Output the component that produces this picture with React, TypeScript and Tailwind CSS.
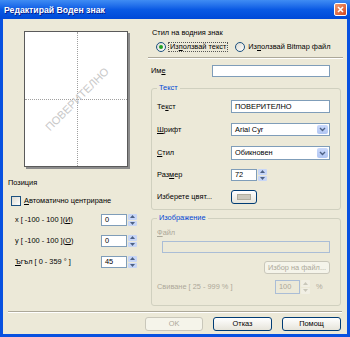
import React from "react";

const Arrow = ({ up, color = "#4d6185" }: { up?: boolean; color?: string }) => (
  <svg width="5" height="3" viewBox="0 0 5 3">
    <path d={up ? "M0 3 L2.5 0 L5 3 Z" : "M0 0 L2.5 3 L5 0 Z"} fill={color} />
  </svg>
);

const Spin = ({ disabled }: { disabled?: boolean }) => (
  <div className="ml-[1px] flex h-full w-[9px] flex-col gap-[1px]">
    <div
      className={`flex flex-1 items-center justify-center rounded-[1px] ${
        disabled ? "bg-[#f1efe4]" : "bg-[#c7d6f7]"
      }`}
    >
      <Arrow up color={disabled ? "#c9c7ba" : "#4d6185"} />
    </div>
    <div
      className={`flex flex-1 items-center justify-center rounded-[1px] ${
        disabled ? "bg-[#f1efe4]" : "bg-[#c7d6f7]"
      }`}
    >
      <Arrow color={disabled ? "#c9c7ba" : "#4d6185"} />
    </div>
  </div>
);

const Input = ({ value, w, disabled }: { value?: string; w: string; disabled?: boolean }) => (
  <div
    className={`flex h-full items-center border pl-[3px] ${w} ${
      disabled ? "border-[#aabdd6] bg-[#ece9d8] text-[#aca899]" : "border-[#7f9db9] bg-white"
    }`}
  >
    {value}
  </div>
);

const Combo = ({ value }: { value: string }) => (
  <div className="flex h-full w-[99px] items-center justify-between border border-[#7f9db9] bg-white pl-[3px]">
    <span>{value}</span>
    <div className="m-[1px] flex h-[calc(100%-2px)] w-[11px] items-center justify-center rounded-[2px] bg-gradient-to-b from-[#c9d8fb] to-[#b1c6f3]">
      <svg width="7" height="5" viewBox="0 0 7 5">
        <path d="M1 1 L3.5 3.5 L6 1" stroke="#4d6185" strokeWidth="1.4" fill="none" />
      </svg>
    </div>
  </div>
);

const Btn = ({ label, w, disabled }: { label: string; w: string; disabled?: boolean }) => (
  <div
    className={`flex h-full items-center justify-center rounded-[3px] border ${w} ${
      disabled
        ? "border-[#c9c7ba] bg-[#f5f4ea] text-[#aca899]"
        : "border-[#003c74] bg-gradient-to-b from-white to-[#e6e4da]"
    }`}
  >
    {label}
  </div>
);

const Radio = ({ checked }: { checked?: boolean }) => (
  <div className="flex h-[10px] w-[10px] items-center justify-center rounded-full border border-[#1c5180] bg-gradient-to-br from-[#dcdad0] to-white">
    {checked && <div className="h-[4px] w-[4px] rounded-full bg-[#21a121]" />}
  </div>
);

const U = ({ children }: { children: React.ReactNode }) => <span className="underline">{children}</span>;

export default function App() {
  return (
    <div className="flex h-[337px] w-[350px] flex-col bg-[#0851e0] font-['Liberation_Sans',Arial,sans-serif] text-[7.4px] leading-[10px] text-black">
      {/* title bar */}
      <div className="flex h-[19px] items-center justify-between bg-gradient-to-b from-[#3f8cf3] via-[#0a5ae4] to-[#0049d8] pl-[4px] pr-[3px]">
        <span className="text-[8.7px] font-bold text-white [text-shadow:1px_1px_0_#0a1e8a]">Редактирай Воден знак</span>
        <div className="flex h-[13px] w-[13px] items-center justify-center rounded-[2px] border border-white bg-gradient-to-br from-[#f09a70] to-[#d2451e]">
          <svg width="7" height="7" viewBox="0 0 7 7">
            <path d="M1 1 L6 6 M6 1 L1 6" stroke="white" strokeWidth="1.6" />
          </svg>
        </div>
      </div>

      {/* body */}
      <div className="mx-[3px] mb-[3px] flex-1 bg-[#ece9d8]">
        <div className="flex h-[292px]">
          {/* left column */}
          <div className="flex w-[145px] flex-col">
            <div className="relative ml-[21px] mt-[12px] h-[136px] w-[104px] border border-[#5a5a5a] bg-white shadow-[2px_2px_0_#8c8c8c]">
              <div className="absolute left-[52px] top-0 h-full border-l border-dotted border-[#a0a0a0]" />
              <div className="absolute left-0 top-[67px] w-full border-t border-dotted border-[#a0a0a0]" />
              <div className="absolute left-[52px] top-[67px] -translate-x-1/2 -translate-y-1/2 -rotate-45 whitespace-nowrap text-[11px] leading-[12px] text-[#c8c8c8]">
                ПОВЕРИТЕЛНО
              </div>
            </div>
            <div className="ml-[5px] mt-[11px]">Позиция</div>
            <div className="ml-[8px] mt-[8px] flex items-center">
              <div className="h-[10px] w-[10px] border border-[#1c5180] bg-gradient-to-br from-[#dcdad0] to-white" />
              <span className="ml-[3px]">
                <U>А</U>втоматично центриране
              </span>
            </div>
            <div className="ml-[12px] mt-[8px] flex h-[12px] items-center">
              <span className="w-[86px]">
                x [ -100 - 100 ](<U>И</U>)
              </span>
              <Input value="0" w="w-[26px]" />
              <Spin />
            </div>
            <div className="ml-[12px] mt-[9px] flex h-[12px] items-center">
              <span className="w-[86px]">
                y [ -100 - 100 ](<U>О</U>)
              </span>
              <Input value="0" w="w-[26px]" />
              <Spin />
            </div>
            <div className="ml-[12px] mt-[9px] flex h-[12px] items-center">
              <span className="w-[86px]">
                <U>Ъ</U>гъл [ 0 - 359 ° ]
              </span>
              <Input value="45" w="w-[26px]" />
              <Spin />
            </div>
          </div>

          {/* right column */}
          <div className="flex w-[198px] flex-col">
            <div className="ml-[4px] mt-[9px]">Стил на водния знак</div>
            <div className="mt-[4px] flex h-[10px] items-center">
              <div className="ml-[8px]">
                <Radio checked />
              </div>
              <span className="ml-[2px] border border-dotted border-[#555] px-[1px] leading-[8px]">
                Из<U>п</U>олзвай текст
              </span>
              <div className="ml-[7px]">
                <Radio />
              </div>
              <span className="ml-[3px]">
                Из<U>п</U>олзвай Bitmap файл
              </span>
            </div>
            <div className="mt-[5px] h-[2px] w-[195px] border-t border-b border-t-[#aca899] border-b-white" />
            <div className="mt-[6px] flex h-[12px] items-center">
              <span className="ml-[3px] w-[61px]">
                Им<U>е</U>
              </span>
              <Input w="w-[118px]" />
            </div>

            <fieldset className="ml-[3px] mt-[6px] w-[190px] rounded-[3px] border border-[#d0d0bf] pb-[5px]">
              <legend className="ml-[5px] px-[2px] text-[#0046d5]">Текст</legend>
              <div className="mt-[7px] flex h-[13px] items-center">
                <span className="ml-[5px] w-[74px]">
                  Те<U>к</U>ст
                </span>
                <Input value="ПОВЕРИТЕЛНО" w="w-[99px]" />
              </div>
              <div className="mt-[10px] flex h-[13px] items-center">
                <span className="ml-[5px] w-[74px]">
                  <U>Ш</U>рифт
                </span>
                <Combo value="Arial Cyr" />
              </div>
              <div className="mt-[10px] flex h-[14px] items-center">
                <span className="ml-[5px] w-[74px]">
                  <U>С</U>тил
                </span>
                <Combo value="Обикновен" />
              </div>
              <div className="mt-[9px] flex h-[12px] items-center">
                <span className="ml-[5px] w-[74px]">
                  Раз<U>м</U>ер
                </span>
                <Input value="72" w="w-[26px]" />
                <Spin />
              </div>
              <div className="mt-[9px] flex h-[14px] items-center">
                <span className="ml-[5px] w-[74px]">Изберете цвят...</span>
                <div className="flex h-full w-[26px] items-center justify-center rounded-[3px] border border-[#003c74] bg-gradient-to-b from-white to-[#e6e4da]">
                  <div className="h-[6px] w-[14px] border border-[#b0ad9e] bg-[#cbc8bc]" />
                </div>
              </div>
            </fieldset>

            <fieldset className="ml-[3px] mt-[3px] w-[190px] rounded-[3px] border border-[#d0d0bf] pb-[11px] text-[#aca899]">
              <legend className="ml-[5px] px-[2px] text-[#0046d5]">Изображение</legend>
              <div className="ml-[5px] mt-[5px]">
                <U>Ф</U>айл
              </div>
              <div className="ml-[10px] mt-[3px] flex h-[12px]">
                <Input disabled w="w-[168px]" />
              </div>
              <div className="ml-[112px] mt-[8px] flex h-[13px]">
                <Btn label="Избор на файл..." w="w-[66px]" disabled />
              </div>
              <div className="mt-[6px] flex h-[14px] items-center">
                <span className="ml-[5px] w-[118px]">Свиване [ 25 - 999 % ]</span>
                <Input value="100" disabled w="w-[25px]" />
                <Spin disabled />
                <span className="ml-[6px]">%</span>
              </div>
            </fieldset>
          </div>
        </div>

        <div className="mx-[5px] h-[2px] border-t border-b border-t-[#aca899] border-b-white" />

        <div className="mt-[4px] flex h-[14px] justify-end gap-[10px] pr-[6px]">
          <Btn label="OK" w="w-[58px]" disabled />
          <Btn label="Отказ" w="w-[59px]" />
          <Btn label="Помощ" w="w-[59px]" />
        </div>
      </div>
    </div>
  );
}
